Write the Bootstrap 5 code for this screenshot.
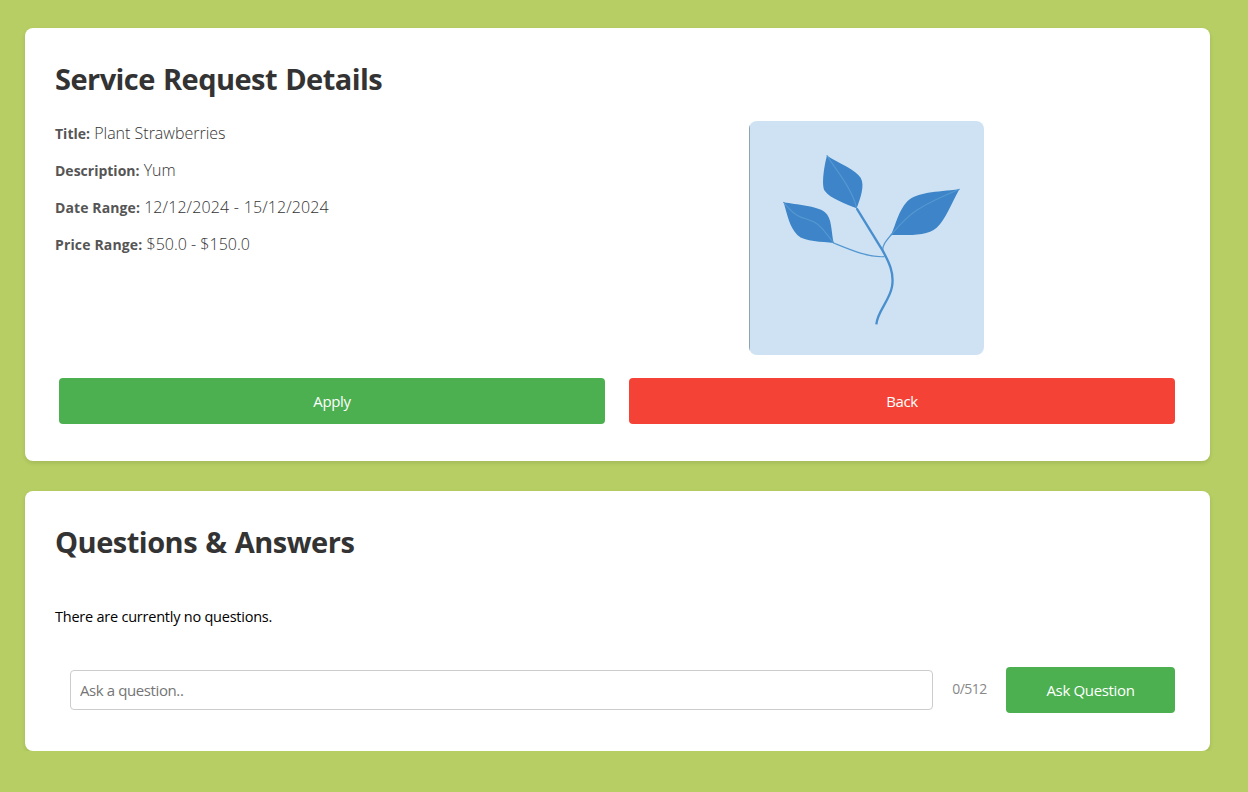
<!DOCTYPE html>
<html lang="en">
<head>
<meta charset="utf-8">
<meta name="viewport" content="width=device-width, initial-scale=1">
<title>Service Request Details</title>
<link href="https://cdn.jsdelivr.net/npm/bootstrap@5.3.0/dist/css/bootstrap.min.css" rel="stylesheet">
<style>
  body { background: #b6ce63; font-family: "Segoe UI", "Open Sans", "Noto Sans", sans-serif; font-size: 15px; color: #000; }
  .page { padding: 28px 38px 0 25px; }
  .panel { background: #fff; border-radius: 8px; box-shadow: 0 2px 4px rgba(0,0,0,.1); padding: 29px 30px 30px; }
  .panel-request { height: 433px; margin-bottom: 30px; }
  .panel-qa { height: 260px; }
  h1 { font-size: 29px; line-height: 43px; font-weight: 700; color: #333; margin: 0; }
  .h-request { letter-spacing: -.55px; word-spacing: 1.2px; }
  .h-qa { letter-spacing: -.5px; word-spacing: 1.2px; }
  .info { height: 234px; margin-top: 21px; }
  .info p { height: 24px; margin: 0 0 13px; line-height: 24px; font-size: 16px; font-weight: 300; color: #333; white-space: nowrap; }
  .info strong { font-size: 14px; font-weight: 700; color: #555; }
  .l3 { letter-spacing: .1px; }
  .l4 { letter-spacing: .15px; }
  .v3 { letter-spacing: .1px; word-spacing: .4px; }
  .picture { width: 235px; height: 234px; border-radius: 8px; margin-left: 131.5px; }
  .actions { margin: 23px 5px 0 4px; gap: 24px; }
  .action { --bs-btn-color: #fff; --bs-btn-hover-color: #fff; height: 46px; border: 0; border-radius: 4px; font-size: 15px; padding: 1px 0 0; letter-spacing: -.35px; }
  .go { --bs-btn-bg: #4caf50; --bs-btn-hover-bg: #45a049; }
  .leave { --bs-btn-bg: #f44336; --bs-btn-hover-bg: #d9372c; }
  .empty { margin: 42px 0 0; line-height: 24px; font-size: 14.5px; letter-spacing: -.23px; }
  .ask { margin: 38px 5px 0 15px; }
  .ask .form-control { width: 863px; height: 40px; border: 1px solid #ccc; border-radius: 4px; padding: 0 9px; font-size: 15px; letter-spacing: -.4px; }
  .ask .form-control::placeholder { color: #757575; }
  .counter { width: 73px; text-align: center; color: #888; font-size: 14px; padding-bottom: 3px; letter-spacing: -.5px; }
  .ask .action { width: 169px; }
</style>
</head>
<body>
<main class="page">
  <section class="panel panel-request">
    <h1><span class="h-request">Service Request Details</span></h1>
    <div class="info row gx-0">
      <div class="col-6">
        <p><strong>Title:</strong> Plant Strawberries</p>
        <p><strong>Description:</strong> Yum</p>
        <p><strong class="l3">Date Range:</strong> <span class="v3">12/12/2024 - 15/12/2024</span></p>
        <p><strong class="l4">Price Range:</strong> $50.0 - $150.0</p>
      </div>
      <div class="col-6">
        <svg class="picture d-block" viewBox="0 0 235 234" role="img" aria-label="Plant">
          <rect width="235" height="234" fill="#cfe2f3"/>
          <rect width="1" height="234" fill="#8fa3b2"/>
          <g transform="translate(-9 -11) scale(.33333)" fill="none" stroke-linecap="round">
            <g fill="#3d85c8">
              <path d="M261 137C300 161 348 180 362 203C376 226 360 267 350 295C320 282 269 265 254 242C243 223 254 160 261 137Z"/>
              <path d="M131 277C170 284 230 288 254 306C277 324 273 364 281 399C246 394 195 397 172 375C149 352 141 313 131 277Z"/>
              <path d="M658 238C634 281 616 331 590 353C562 378 510 375 453 375C467 346 475 303 502 274C530 247 588 246 658 238Z"/>
            </g>
            <g stroke="#5598d1" stroke-width="3.5">
              <path d="M261 137C295 190 337 238 350 295"/>
              <path d="M131 277C150 301 164 315 184 322C211 331 228 334 246 355C260 371 271 386 281 399"/>
              <path d="M658 238C612 257 566 278 530 301C499 321 475 349 453 375"/>
              <path d="M281 399C340 423 384 442 432 440M453 375C436 395 425 409 429 426"/>
            </g>
            <path d="M350 295L428 422C448 458 463 490 456 530C449 572 412 604 409 643" stroke="#4a8fcd" stroke-width="7" stroke-linecap="butt"/>
          </g>
        </svg>
      </div>
    </div>
    <div class="actions d-flex">
      <button type="button" class="btn action go flex-fill w-50">Apply</button>
      <button type="button" class="btn action leave flex-fill w-50">Back</button>
    </div>
  </section>
  <section class="panel panel-qa">
    <h1><span class="h-qa">Questions &amp; Answers</span></h1>
    <p class="empty">There are currently no questions.</p>
    <form class="ask d-flex align-items-center">
      <input type="text" class="form-control" placeholder="Ask a question.." maxlength="512">
      <span class="counter">0/512</span>
      <button type="button" class="btn action go">Ask Question</button>
    </form>
  </section>
</main>
<script src="https://cdn.jsdelivr.net/npm/bootstrap@5.3.0/dist/js/bootstrap.bundle.min.js"></script>
</body>
</html>
